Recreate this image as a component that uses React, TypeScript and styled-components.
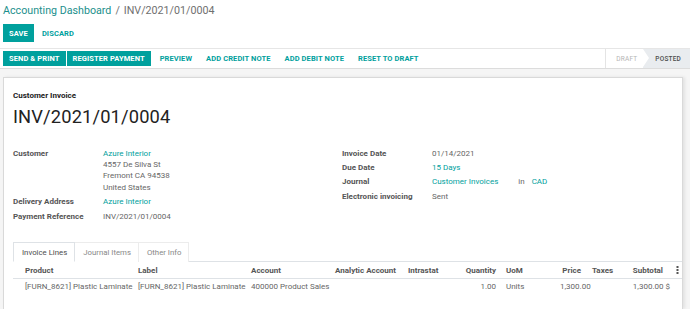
import React from 'react';
import styled, { createGlobalStyle } from 'styled-components';

const Global = createGlobalStyle`
  html, body { margin: 0; padding: 0; background: #fff; }
  body { font-family: Roboto, "Liberation Sans", sans-serif; color: #4c4c4c; -webkit-font-smoothing: antialiased; }
  * { box-sizing: border-box; }
`;

const TEAL = '#00A09D';

const Page = styled.div`
  width: 690px;
  height: 309px;
  display: flex;
  flex-direction: column;
  overflow: hidden;
  background: #fff;
`;

const ControlPanel = styled.div`
  height: 48px;
  padding: 0 3px;
  display: flex;
  flex-direction: column;
`;

const Breadcrumb = styled.div`
  height: 24px;
  padding-top: 4px;
  font-size: 10.7px;
  line-height: 14px;
  display: flex;
  gap: 4px;
  color: #6f6f6f;
`;

const Crumb = styled.span`
  color: #1b8f8c;
`;

const ButtonRow = styled.div`
  display: flex;
  align-items: center;
  height: 18px;
  gap: 1px;
`;

const PrimaryBtn = styled.button<{ $h?: number }>`
  height: ${(p) => p.$h ?? 18}px;
  padding: 0 6px;
  border: none;
  border-radius: 0;
  background: ${TEAL};
  color: #fff;
  font-family: inherit;
  font-weight: 700;
  font-size: 7.5px;
  letter-spacing: 0.1px;
  white-space: nowrap;
  cursor: pointer;
`;

const LinkBtn = styled.button<{ $h?: number }>`
  height: ${(p) => p.$h ?? 18}px;
  padding: 0 7px;
  border: none;
  background: transparent;
  color: ${TEAL};
  font-family: inherit;
  font-weight: 700;
  font-size: 7.5px;
  letter-spacing: 0.1px;
  white-space: nowrap;
  cursor: pointer;
`;

const Toolbar = styled.div`
  height: 21px;
  border-top: 1px solid #e6e6e6;
  border-bottom: 1px solid #dcdcdc;
  display: flex;
  align-items: center;
  padding-left: 3px;
`;

const ToolbarButtons = styled.div`
  display: flex;
  align-items: center;
  gap: 1px;
  flex: 1;
`;

const LinkGroup = styled.div`
  display: flex;
  align-items: center;
  margin-left: 1px;
`;

const StatusBar = styled.div`
  display: flex;
  align-self: stretch;
  border-left: 1px solid #e4e4e4;
`;

const StatusItem = styled.div<{ $active?: boolean }>`
  position: relative;
  display: flex;
  align-items: center;
  padding: ${(p) => (p.$active ? '0 9px 0 12px' : '0 6px 0 10px')};
  background: ${(p) => (p.$active ? '#e9ecef' : '#fff')};
  color: ${(p) => (p.$active ? '#4c4c4c' : '#b5b5b5')};
  font-weight: ${(p) => (p.$active ? 500 : 400)};
  font-size: 6.5px;
  letter-spacing: 0.2px;
  &::before {
    content: ${(p) => (p.$active ? "''" : 'none')};
    position: absolute;
    left: 0;
    top: 0;
    border-top: 9.5px solid transparent;
    border-bottom: 9.5px solid transparent;
    border-left: 6px solid #fff;
  }
`;

const Content = styled.div`
  flex: 1;
  background: #f5f5f5;
  padding: 8px 8px 0 3px;
  display: flex;
`;

const Sheet = styled.div`
  flex: 1;
  background: #fff;
  border: 1px solid #d9d9d9;
  border-bottom: none;
  box-shadow: 2px 0 3px rgba(0, 0, 0, 0.08);
  padding: 13px 0 0 9px;
  display: flex;
  flex-direction: column;
`;

const Kind = styled.div`
  font-size: 8px;
  line-height: 10px;
  font-weight: 700;
  color: #222;
`;

const Title = styled.h1`
  margin: 4px 0 0;
  font-size: 18.3px;
  line-height: 24px;
  font-weight: 400;
  color: #222;
  letter-spacing: 0.15px;
`;

const Groups = styled.div`
  margin-top: 17px;
  display: grid;
  grid-template-columns: 329px 330px;
`;

const Group = styled.div`
  display: flex;
  flex-direction: column;
`;

const FieldRow = styled.div`
  display: grid;
  grid-template-columns: 90px 1fr;
  padding: 1.5px 0;
  font-size: 8px;
  line-height: 11.4px;
`;

const Label = styled.div`
  font-weight: 700;
  color: #555;
`;

const Value = styled.div`
  color: #666;
  display: flex;
  flex-direction: column;
`;

const Link = styled.span`
  color: ${TEAL};
`;

const InlineValue = styled.div`
  display: flex;
`;

const InWord = styled.span`
  color: #666;
  margin: 0 7px 0 20px;
`;

const Notebook = styled.div`
  margin-top: 19px;
  display: flex;
  flex-direction: column;
`;

const Tabs = styled.div`
  display: flex;
  height: 20px;
  border-bottom: 1px solid #dee2e6;
`;

const Tab = styled.div<{ $active?: boolean }>`
  height: 20px;
  padding: 0 7px 0 8px;
  display: flex;
  align-items: center;
  font-size: 7.8px;
  color: ${(p) => (p.$active ? '#4c4c4c' : '#888')};
  background: #fff;
  border: 1px solid ${(p) => (p.$active ? '#dee2e6' : '#ececec')};
  border-bottom: ${(p) => (p.$active ? '1px solid #fff' : 'none')};
  margin-left: ${(p) => (p.$active ? 0 : -1)}px;
  position: relative;
  z-index: ${(p) => (p.$active ? 1 : 0)};
`;

const Table = styled.table`
  width: 669px;
  table-layout: fixed;
  border-collapse: collapse;
  font-size: 8px;
`;

const HeadRow = styled.tr`
  height: 16px;
  border-bottom: 1px solid #dee2e6;
`;

const BodyRow = styled.tr`
  height: 16px;
`;

type CellProps = { $w?: number; $pl?: number; $pr?: number; $right?: boolean };

const Th = styled.th<CellProps>`
  width: ${(p) => (p.$w ? `${p.$w}px` : 'auto')};
  padding: 0 ${(p) => p.$pr ?? 2}px 0 ${(p) => p.$pl ?? 4}px;
  text-align: ${(p) => (p.$right ? 'right' : 'left')};
  font-weight: 700;
  color: #555;
  white-space: nowrap;
  overflow: visible;
`;

const Td = styled.td<CellProps>`
  padding: 0 ${(p) => p.$pr ?? 2}px 0 ${(p) => p.$pl ?? 4}px;
  text-align: ${(p) => (p.$right ? 'right' : 'left')};
  color: #666;
  white-space: nowrap;
  overflow: visible;
`;

const Kebab = () => (
  <svg width="3" height="8" viewBox="0 0 3 8" style={{ display: 'block', margin: '0 auto' }}>
    <rect x="0.5" y="0" width="2" height="2" fill="#555" />
    <rect x="0.5" y="3" width="2" height="2" fill="#555" />
    <rect x="0.5" y="6" width="2" height="2" fill="#555" />
  </svg>
);

export default function App() {
  return (
    <Page>
      <Global />
      <ControlPanel>
        <Breadcrumb>
          <Crumb>Accounting Dashboard</Crumb>
          <span>/</span>
          <span>INV/2021/01/0004</span>
        </Breadcrumb>
        <ButtonRow>
          <PrimaryBtn>SAVE</PrimaryBtn>
          <LinkBtn>DISCARD</LinkBtn>
        </ButtonRow>
      </ControlPanel>
      <Toolbar>
        <ToolbarButtons>
          <PrimaryBtn $h={15}>SEND &amp; PRINT</PrimaryBtn>
          <PrimaryBtn $h={15}>REGISTER PAYMENT</PrimaryBtn>
          <LinkGroup>
            <LinkBtn $h={15}>PREVIEW</LinkBtn>
            <LinkBtn $h={15}>ADD CREDIT NOTE</LinkBtn>
            <LinkBtn $h={15}>ADD DEBIT NOTE</LinkBtn>
            <LinkBtn $h={15}>RESET TO DRAFT</LinkBtn>
          </LinkGroup>
        </ToolbarButtons>
        <StatusBar>
          <StatusItem>DRAFT</StatusItem>
          <StatusItem $active>POSTED</StatusItem>
        </StatusBar>
      </Toolbar>
      <Content>
        <Sheet>
          <Kind>Customer Invoice</Kind>
          <Title>INV/2021/01/0004</Title>
          <Groups>
            <Group>
              <FieldRow>
                <Label>Customer</Label>
                <Value>
                  <Link>Azure Interior</Link>
                  <span>4557 De Silva St</span>
                  <span>Fremont CA 94538</span>
                  <span>United States</span>
                </Value>
              </FieldRow>
              <FieldRow>
                <Label>Delivery Address</Label>
                <Value>
                  <Link>Azure Interior</Link>
                </Value>
              </FieldRow>
              <FieldRow>
                <Label>Payment Reference</Label>
                <Value>INV/2021/01/0004</Value>
              </FieldRow>
            </Group>
            <Group>
              <FieldRow>
                <Label>Invoice Date</Label>
                <Value>01/14/2021</Value>
              </FieldRow>
              <FieldRow>
                <Label>Due Date</Label>
                <Value>
                  <Link>15 Days</Link>
                </Value>
              </FieldRow>
              <FieldRow>
                <Label>Journal</Label>
                <InlineValue>
                  <Link>Customer Invoices</Link>
                  <InWord>in</InWord>
                  <Link>CAD</Link>
                </InlineValue>
              </FieldRow>
              <FieldRow>
                <Label>Electronic invoicing</Label>
                <Value>Sent</Value>
              </FieldRow>
            </Group>
          </Groups>
          <Notebook>
            <Tabs>
              <Tab $active>Invoice Lines</Tab>
              <Tab>Journal Items</Tab>
              <Tab>Other Info</Tab>
            </Tabs>
            <Table>
              <thead>
                <HeadRow>
                  <Th $w={121} $pl={12}>Product</Th>
                  <Th $w={113}>Label</Th>
                  <Th $w={84}>Account</Th>
                  <Th $w={73}>Analytic Account</Th>
                  <Th $w={48}>Intrastat</Th>
                  <Th $w={48} $right $pr={4}>Quantity</Th>
                  <Th $w={56} $pl={6}>UoM</Th>
                  <Th $w={34} $right $pr={9}>Price</Th>
                  <Th $w={30} $pl={2}>Taxes</Th>
                  <Th $w={52} $right $pr={9}>Subtotal</Th>
                  <Th $w={10} $pl={0} $pr={0}>
                    <Kebab />
                  </Th>
                </HeadRow>
              </thead>
              <tbody>
                <BodyRow>
                  <Td $pl={12}>[FURN_8621] Plastic Laminate</Td>
                  <Td>[FURN_8621] Plastic Laminate</Td>
                  <Td>400000 Product Sales</Td>
                  <Td />
                  <Td />
                  <Td $right $pr={4}>1.00</Td>
                  <Td $pl={6}>Units</Td>
                  <Td $right $pr={3}>1,300.00</Td>
                  <Td $pl={2} />
                  <Td $right $pr={2}>1,300.00 $</Td>
                  <Td />
                </BodyRow>
              </tbody>
            </Table>
          </Notebook>
        </Sheet>
      </Content>
    </Page>
  );
}
